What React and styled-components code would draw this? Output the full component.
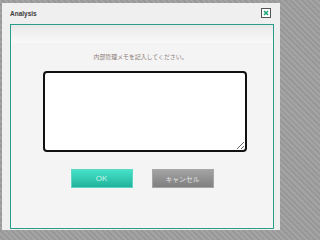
import React from 'react';
import styled, { createGlobalStyle } from 'styled-components';

const GlobalStyle = createGlobalStyle`
  html, body {
    margin: 0;
    padding: 0;
  }
  html {
    background: #9e9e9e repeating-linear-gradient(45deg, #a4a4a4 0 2px, #989898 2px 4px);
  }
  body {
    min-height: 100vh;
    font-family: "Noto Sans", "Noto Sans CJK JP", sans-serif;
  }
`;

const Backdrop = styled.div`
  width: 285px;
  height: 236px;
  box-sizing: border-box;
  padding: 3px 5px 6px 2px;
`;

const Dialog = styled.div`
  height: 100%;
  display: flex;
  flex-direction: column;
  background: #efefef;
  box-sizing: border-box;
  padding: 0 6px 1px 8px;
`;

const TitleBar = styled.div`
  height: 21px;
  display: flex;
  align-items: center;
  justify-content: space-between;
  padding-right: 3px;
`;

const Title = styled.span`
  font-family: "Liberation Sans", Arial, sans-serif;
  font-weight: bold;
  font-size: 6.5px;
  color: #3a3a3a;
  margin-top: -1px;
`;

const CloseButton = styled.button`
  width: 10px;
  height: 10px;
  padding: 0;
  border: 1px solid #555;
  background: #fff;
  display: flex;
  align-items: center;
  justify-content: center;
  margin-top: -2px;
  cursor: pointer;
`;

const Panel = styled.div`
  flex: 1;
  border: 1px solid #2a9d8a;
  display: flex;
  flex-direction: column;
  background: #f4f4f4;
`;

const PanelHeader = styled.div`
  height: 18px;
  background: linear-gradient(#e9e9e9, #f9f9f9);
`;

const PanelBody = styled.div`
  display: flex;
  flex-direction: column;
  padding-top: 10px;
`;

const Prompt = styled.p`
  margin: 0;
  text-align: center;
  font-family: "Noto Sans CJK JP", sans-serif;
  font-size: 5.9px;
  line-height: 8px;
  color: #8a7a76;
  padding-right: 3px;
`;

const MemoField = styled.textarea`
  display: block;
  width: 204px;
  height: 81px;
  margin: 10px 0 0 32px;
  box-sizing: border-box;
  border: 2px solid #111;
  border-radius: 4px;
  background: #fff;
  resize: both;
  outline: none;
  font-size: 7px;
`;

const Actions = styled.div`
  display: flex;
  justify-content: center;
  gap: 19px;
  margin-top: 17px;
`;

const ActionButton = styled.button`
  width: 62px;
  height: 19px;
  padding: 0;
  border: 1px solid ${(p) => (p.$primary ? '#5fd7c4' : '#a6a6a6')};
  background: ${(p) =>
    p.$primary
      ? 'linear-gradient(#45e2c7, #22b29c)'
      : 'linear-gradient(#a3a3a3, #7f7f7f)'};
  color: ${(p) => (p.$primary ? '#c4f5ea' : '#e4e4e4')};
  font-family: ${(p) =>
    p.$primary ? '"Liberation Sans", Arial, sans-serif' : '"Noto Sans CJK JP", sans-serif'};
  font-size: ${(p) => (p.$primary ? '8px' : '6.8px')};
  cursor: pointer;
`;

export default function App() {
  return (
    <>
      <GlobalStyle />
      <Backdrop>
        <Dialog>
          <TitleBar>
            <Title>Analysis</Title>
            <CloseButton aria-label="close">
              <svg width="6" height="6" viewBox="0 0 6 6">
                <path d="M1 1L5 5M5 1L1 5" stroke="#1fa67a" strokeWidth="1.6" />
              </svg>
            </CloseButton>
          </TitleBar>
          <Panel>
            <PanelHeader />
            <PanelBody>
              <Prompt>内部管理メモを記入してください。</Prompt>
              <MemoField autoFocus />
              <Actions>
                <ActionButton $primary>OK</ActionButton>
                <ActionButton>キャンセル</ActionButton>
              </Actions>
            </PanelBody>
          </Panel>
        </Dialog>
      </Backdrop>
    </>
  );
}
